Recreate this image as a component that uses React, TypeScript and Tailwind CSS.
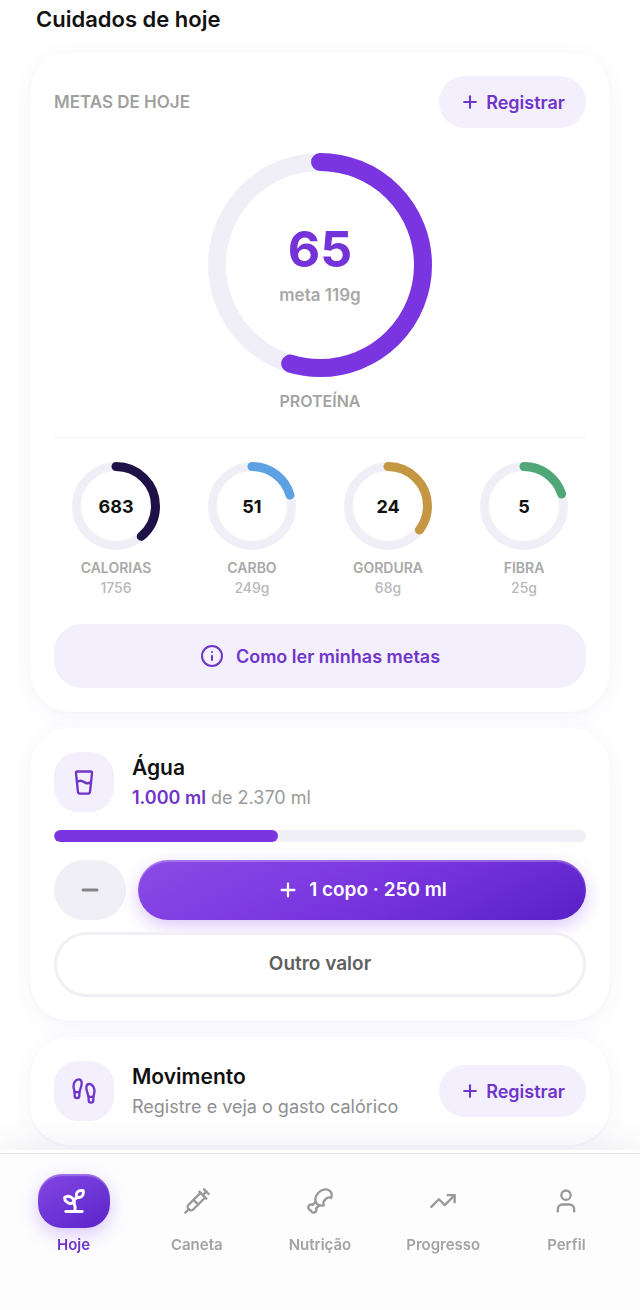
import { ReactNode } from "react";
import {
  Drumstick,
  Footprints,
  GlassWater,
  Info,
  Minus,
  Plus,
  Sprout,
  Syringe,
  TrendingUp,
  User,
} from "lucide-react";

const macros = [
  { label: "CALORIAS", value: 683, goal: 1756, unit: "", color: "#1e1147" },
  { label: "CARBO", value: 51, goal: 249, unit: "g", color: "#5da1e3" },
  { label: "GORDURA", value: 24, goal: 68, unit: "g", color: "#c59743" },
  { label: "FIBRA", value: 5, goal: 25, unit: "g", color: "#4fa777" },
];

const tabs = [
  { label: "Hoje", icon: Sprout, active: true },
  { label: "Caneta", icon: Syringe },
  { label: "Nutrição", icon: Drumstick },
  { label: "Progresso", icon: TrendingUp },
  { label: "Perfil", icon: User },
];

type RingProps = {
  size: number;
  stroke: number;
  progress: number;
  color: string;
  children: ReactNode;
};

function Ring({ size, stroke, progress, color, children }: RingProps) {
  const r = (size - stroke) / 2;
  const length = 2 * Math.PI * r;

  return (
    <div className="grid place-items-center">
      <svg width={size} height={size} className="col-start-1 row-start-1 -rotate-90">
        <circle cx={size / 2} cy={size / 2} r={r} fill="none" stroke="#f0eff8" strokeWidth={stroke} />
        <circle
          cx={size / 2}
          cy={size / 2}
          r={r}
          fill="none"
          stroke={color}
          strokeWidth={stroke}
          strokeLinecap="round"
          strokeDasharray={`${length * progress} ${length}`}
        />
      </svg>
      <div className="col-start-1 row-start-1 text-center">{children}</div>
    </div>
  );
}

function Card({ children }: { children: ReactNode }) {
  return (
    <section className="rounded-[40px] bg-white p-6 shadow-[0_4px_24px_rgba(80,60,180,0.05),0_1px_3px_rgba(80,60,180,0.04)]">
      {children}
    </section>
  );
}

function RegisterButton() {
  return (
    <button
      type="button"
      className="flex h-[52px] shrink-0 items-center gap-1.5 rounded-full bg-[#f3effc] px-[21px] text-[18px] font-semibold text-[#6f35c9]"
    >
      <Plus size={20} strokeWidth={2.5} />
      Registrar
    </button>
  );
}

function IconTile({ children }: { children: ReactNode }) {
  return (
    <div className="flex size-[60px] shrink-0 items-center justify-center rounded-3xl bg-[#f3effc] text-[#6f35c9]">
      {children}
    </div>
  );
}

function GoalsCard() {
  return (
    <Card>
      <div className="flex items-center justify-between">
        <h2 className="text-[17px] leading-7 font-semibold text-[#9f9f9f]">METAS DE HOJE</h2>
        <RegisterButton />
      </div>

      <div className="mt-[25px] border-b border-[#f3f2f6] pb-6 text-center">
        <Ring size={224} stroke={18} progress={65 / 119} color="#7b35e0">
          <p className="text-[50px] leading-[52px] font-bold text-[#7433d9]">65</p>
          <p className="mt-2 text-[17px] leading-6 font-semibold text-[#a8a8a8]">meta 119g</p>
        </Ring>
        <p className="mt-3 text-[16px] leading-6 font-semibold text-[#a3a3a3]">PROTEÍNA</p>
      </div>

      <div className="grid grid-cols-4 gap-3 pt-6 text-center">
        {macros.map((m) => (
          <div key={m.label}>
            <Ring size={88} stroke={9} progress={m.value / m.goal} color={m.color}>
              <span className="text-[18px] font-bold text-[#111111]">{m.value}</span>
            </Ring>
            <p className="mt-2 text-[14px] leading-5 font-semibold text-[#a8a8a8]">{m.label}</p>
            <p className="text-[14px] leading-5 font-medium text-[#b8b8b8]">
              {m.goal}
              {m.unit}
            </p>
          </div>
        ))}
      </div>

      <button
        type="button"
        className="mt-[26px] flex h-16 w-full items-center justify-center gap-3 rounded-[28px] bg-[#f3effc] text-[18px] font-semibold text-[#6f35c9]"
      >
        <Info size={24} strokeWidth={2} />
        Como ler minhas metas
      </button>
    </Card>
  );
}

function WaterCard() {
  const drunk = 1000;
  const goal = 2370;

  return (
    <Card>
      <div className="flex items-center gap-[18px]">
        <IconTile>
          <GlassWater size={28} />
        </IconTile>
        <div>
          <h2 className="text-[21px] leading-8 font-semibold text-[#111111]">Água</h2>
          <p className="text-[18px] leading-7 text-[#9a9a9a]">
            <span className="font-semibold text-[#6f35c9]">1.000 ml</span> de 2.370 ml
          </p>
        </div>
      </div>

      <div className="mt-[18px] h-3 overflow-hidden rounded-full bg-[#f0eff6]">
        <div className="h-full rounded-full bg-[#7b35e0]" style={{ width: `${(drunk / goal) * 100}%` }} />
      </div>

      <div className="mt-[18px] flex gap-3">
        <button
          type="button"
          aria-label="Remover um copo"
          className="flex h-[60px] w-[72px] shrink-0 items-center justify-center rounded-full bg-[#f0eff6] text-[#858585]"
        >
          <Minus size={24} strokeWidth={3} />
        </button>
        <button
          type="button"
          className="flex h-[60px] flex-1 items-center justify-center gap-2.5 rounded-full bg-linear-155 from-[#8b4ae8] via-[#7a35de] to-[#5820c8] text-[19px] font-semibold text-white shadow-[0_6px_18px_rgba(124,58,237,0.28),inset_0_2px_1px_rgba(255,255,255,0.25)]"
        >
          <Plus size={22} strokeWidth={2.5} />1 copo · 250 ml
        </button>
      </div>

      <button
        type="button"
        className="relative mt-3 h-[65px] w-full rounded-full border-3 border-[#f0eff6] bg-white text-[19px] font-semibold text-[#5f5f5f]"
      >
        Outro valor
      </button>
    </Card>
  );
}

function MovementCard() {
  return (
    <Card>
      <div className="flex items-center gap-[18px]">
        <IconTile>
          <Footprints size={28} />
        </IconTile>
        <div className="min-w-0 flex-1">
          <h2 className="text-[21px] leading-8 font-semibold text-[#111111]">Movimento</h2>
          <p className="text-[18px] leading-7 text-[#8f8f8f]">Registre e veja o gasto calórico</p>
        </div>
        <RegisterButton />
      </div>
    </Card>
  );
}

function TabBar() {
  return (
    <nav className="fixed inset-x-0 bottom-0 border-t border-[#e9e5f0] bg-[#fdfdfe] px-3 pt-5 pb-[53px] shadow-[0_-3px_0_#ffffff,0_-10px_28px_rgba(60,50,110,0.08)]">
      <ul className="grid grid-cols-5">
        {tabs.map(({ label, icon: Icon, active }) => (
          <li key={label}>
            <a
              href="#"
              className={`flex flex-col items-center text-[15px] leading-6 font-semibold ${
                active ? "text-[#6f35c9]" : "text-[#a3a3a3]"
              }`}
            >
              <span
                className={`mb-[5px] flex h-[54px] w-[72px] items-center justify-center rounded-3xl ${
                  active
                    ? "bg-linear-150 from-[#8446e4] to-[#5b22c9] text-white shadow-[0_6px_18px_rgba(124,58,237,0.28),inset_0_2px_1px_rgba(255,255,255,0.25)]"
                    : "text-[#999999]"
                }`}
              >
                <Icon size={28} strokeWidth={active ? 2.5 : 2} />
              </span>
              {label}
            </a>
          </li>
        ))}
      </ul>
    </nav>
  );
}

export default function App() {
  return (
    <div className="min-h-screen bg-white font-['Inter',sans-serif]">
      <main className="px-[30px] pb-[164px]">
        <h1 className="px-1.5 pt-[3px] pb-[17px] text-[22px] leading-8 font-semibold text-[#111111]">
          Cuidados de hoje
        </h1>
        <div className="flex flex-col gap-4">
          <GoalsCard />
          <WaterCard />
          <MovementCard />
        </div>
      </main>
      <TabBar />
    </div>
  );
}
